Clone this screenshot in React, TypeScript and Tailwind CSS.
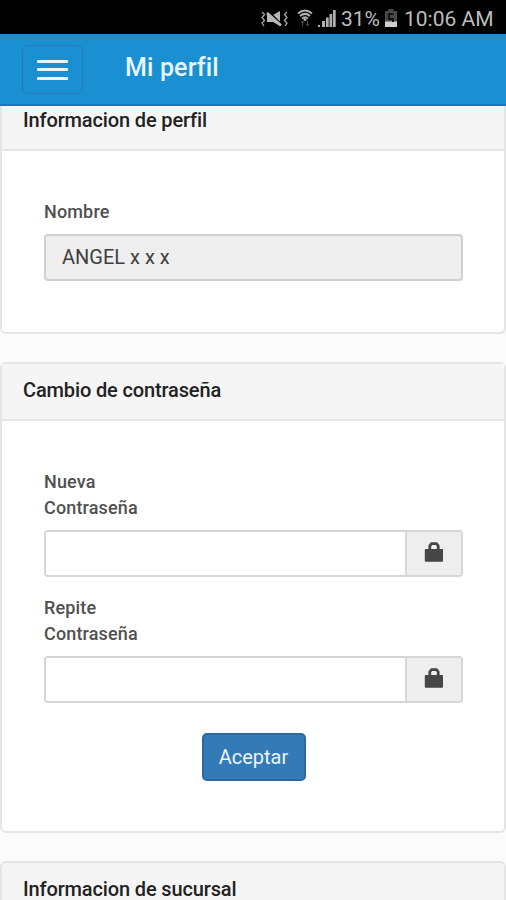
import React from 'react';

const LockIcon: React.FC = () => (
  <svg width="20" height="22" viewBox="0 0 20 22" fill="none">
    <path d="M5.800 9V4.800L7.500 2.700H12.500L14.200 4.800V9" stroke="#464646" strokeWidth="2.800" strokeLinejoin="round" />
    <rect x="0.800" y="8" width="18.200" height="12.800" rx="1" fill="#464646" />
  </svg>
);

const StatusBar: React.FC = () => (
  <div className="h-[34px] bg-black flex items-center pl-[261px] text-[#bdbdbd] shrink-0">
    <svg className="shrink-0 mt-1" width="27" height="18" viewBox="0 0 27 18" fill="none" stroke="#a8a8a8">
      <path d="M1 2l2.500 2.500L1 7.500l2.500 3L1 13l2 3M26 2l-2.500 2.500 2.500 3-2.500 3L26 13l-2 3" strokeWidth="1.300" />
      <path d="M6 5h6l7-4v15l-7-4H6z" fill="#b8b8b8" stroke="none" />
      <path d="M8 2l13 13" stroke="#000" strokeWidth="2" />
      <path d="M6 3l14 12.500" strokeWidth="2.800" stroke="#b8b8b8" />
    </svg>
    <svg className="shrink-0 ml-[9px] mt-0.5" width="16" height="18" viewBox="0 0 16 18" fill="none" stroke="#b0b0b0">
      <path d="M1 4.500Q8-1.500 15 4.500M3 7Q8 2.800 13 7M5 9.500Q8 7 11 9.500" strokeWidth="2" />
      <circle cx="8" cy="10.500" r="1.500" fill="#b0b0b0" stroke="none" />
      <path d="M5.500 12v5M4 14l1.500-2L7 14M10.500 12v5M9 15l1.500 2 1.500-2" stroke="#484848" />
    </svg>
    <svg className="shrink-0 ml-[5px] mt-0.5" width="18" height="18" viewBox="0 0 18 18" fill="#b0b0b0">
      <path d="M0 16h2v2H0zM4 12h3v6H4zM8 8.500h2.700v9.500H8zM11.500 5h2.700v13h-2.700zM15 1h2.700v17H15z" />
    </svg>
    <span className="ml-[5px] mt-1 w-[40px] text-[21px] leading-6 whitespace-nowrap">31%</span>
    <svg className="shrink-0 ml-1 mt-0.5" width="12" height="18" viewBox="0 0 12 18">
      <path d="M3.500 0h5v2H12v16H0V2h3.500z" fill="#484848" />
      <path d="M0 12.500h12V18H0z" fill="#d0d0d0" />
      <path d="M8.500 5H4v5h4v3" fill="none" stroke="#111" strokeWidth="2" />
    </svg>
    <span className="ml-[7px] mt-1 text-[21px] leading-6 whitespace-nowrap">10:06 AM</span>
  </div>
);

const PasswordField: React.FC<{ label: string }> = ({ label }) => (
  <div>
    <label className="block text-[18px] leading-[25.5px] font-medium text-[#505050] tracking-[0.15px]">
      {label}
      <br />
      Contraseña
    </label>
    <div className="mt-2.5 flex h-[47px] rounded-[4px] border-2 border-[#d6d6d6] overflow-hidden">
      <input type="password" className="flex-1 min-w-0 bg-white outline-none" />
      <span className="w-[56px] border-l-2 border-[#d8d8d8] bg-[#eeeeee] flex justify-center pt-[9px]">
        <LockIcon />
      </span>
    </div>
  </div>
);

const App: React.FC = () => {
  return (
    <div className="w-[506px] h-[900px] overflow-hidden flex flex-col bg-[#fbfbfb] font-[Roboto,sans-serif]">
      <StatusBar />

      <header className="h-[72px] shrink-0 bg-[#1a90d2] border-b-2 border-[#1479b8] flex items-start pl-[22px]">
        <button className="mt-[11px] w-[61px] h-[49px] rounded-[6px] border border-[#2779b5] flex flex-col items-center justify-center gap-[5.5px]">
          <span className="block w-[31px] h-[3px] rounded-[1px] bg-[#e8f5fd]" />
          <span className="block w-[31px] h-[3px] rounded-[1px] bg-[#e8f5fd]" />
          <span className="block w-[31px] h-[3px] rounded-[1px] bg-[#e8f5fd]" />
        </button>
        <h1 className="ml-[42px] mt-[18px] text-[25px] leading-8 font-medium text-[#e8f5fd] tracking-[0.15px]">Mi perfil</h1>
      </header>

      <section className="h-[228px] shrink-0 bg-white border-2 border-t-0 border-[#e5e5e5] rounded-b-[6px]">
        <h2 className="h-[45px] bg-[#f5f5f5] border-b-2 border-[#e5e5e5] pl-[21px] text-[20px] leading-7 font-medium text-[#222] tracking-[-0.14px]">
          Informacion de perfil
        </h2>
        <div className="pt-12 pl-[42px] pr-[41px]">
          <label className="block text-[18px] leading-[26px] font-medium text-[#505050] tracking-[0.15px]">Nombre</label>
          <div className="mt-[9px] h-[47px] rounded-[4px] border-2 border-[#d0d0d0] bg-[#eeeeee] pl-4 text-[20px] leading-[43px] text-[#404040]">
            ANGEL x x x
          </div>
        </div>
      </section>

      <section className="mt-7 h-[471px] shrink-0 bg-white border-2 border-[#e5e5e5] rounded-[6px]">
        <h2 className="h-[57px] bg-[#f5f5f5] border-b-2 border-[#e5e5e5] pl-[21px] text-[20px] leading-[53px] font-medium text-[#222] tracking-[-0.14px]">
          Cambio de contraseña
        </h2>
        <div className="pt-12 pl-[42px] pr-[41px]">
          <PasswordField label="Nueva" />
          <div className="mt-[18px]">
            <PasswordField label="Repite" />
          </div>
          <button className="block mx-auto mt-[30px] w-[104px] h-[48px] rounded-[5px] border-2 border-[#2969a3] bg-[#337ab7] text-[20px] leading-[42px] text-[#edf5fc]">
            Aceptar
          </button>
        </div>
      </section>

      <section className="mt-7 h-[60px] shrink-0 bg-[#f5f5f5] border-2 border-[#e5e5e5] rounded-t-[6px]">
        <h2 className="pl-[21px] text-[20px] leading-[53px] font-medium text-[#222] tracking-[-0.14px]">Informacion de sucursal</h2>
      </section>
    </div>
  );
};

export default App;
